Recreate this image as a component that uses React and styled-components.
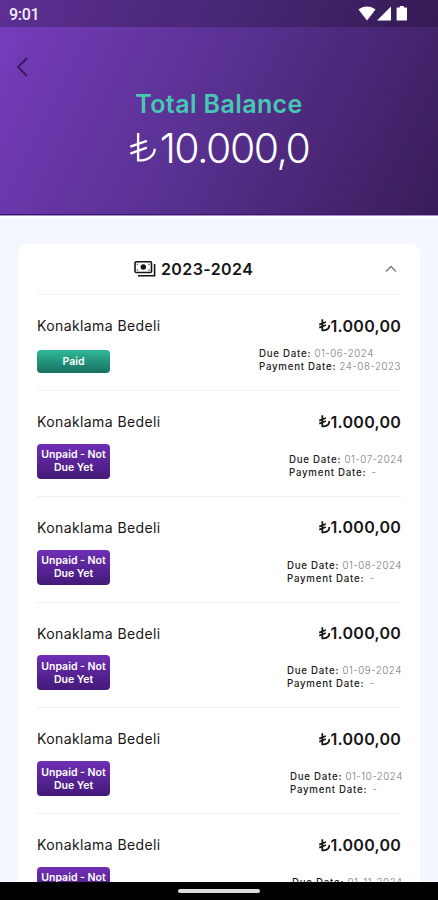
import styled, { createGlobalStyle } from "styled-components";

const payments = [
  { id: 1, paid: true, due: "01-06-2024", paidAt: "24-08-2023", width: 142 },
  { id: 2, due: "01-07-2024", width: 112 },
  { id: 3, due: "01-08-2024", width: 114 },
  { id: 4, due: "01-09-2024", width: 114 },
  { id: 5, due: "01-10-2024", width: 111 },
  { id: 6, due: "01-11-2024", width: 109 },
];

const PaymentRow = ({ payment }) => {
  const { paid, due, paidAt, width } = payment;
  return (
    <Row $paid={paid}>
      <RowTop>
        <Name>Konaklama Bedeli</Name>
        <Price>
          <LiraIcon $size={13} viewBox="0 0 28 32">
            <path d="M9 3v25h3c8 0 13-5 13-12M2 15l15-6M2 22l15-6" strokeWidth="4" />
          </LiraIcon>
          1.000,00
        </Price>
      </RowTop>
      <RowBottom>
        <Badge $paid={paid}>{paid ? "Paid" : "Unpaid - Not Due Yet"}</Badge>
        <Dates $width={width}>
          <DateLine>
            <b>Due Date:</b> {due}
          </DateLine>
          <DateLine>
            <b>Payment Date:</b> {paidAt || <Dash>-</Dash>}
          </DateLine>
        </Dates>
      </RowBottom>
    </Row>
  );
};

const App = () => {
  return (
    <Screen>
      <GlobalStyle />
      <Header>
        <StatusBar>
          <Time>9:01</Time>
          <svg width="52" height="18" viewBox="0 0 52 18" fill="#fff">
            <path d="M0.5 4.6C5.5 0.6 12.5 0.6 17.5 4.6L9 15.5Z" />
            <path d="M33 1.5V15.5H19Z" />
            <path d="M41.8 1h4v1.5h2.6q.6 0 .6.6v11.8q0 .6-.6.6h-9.2q-.6 0-.6-.6v-11.8q0-.6.6-.6h2.6z" />
          </svg>
        </StatusBar>
        <BackButton>
          <svg width="14" height="22" viewBox="0 0 14 22" fill="none" stroke="#3a1760" strokeWidth="1.9">
            <path d="M12 2L3 11l9 9" />
          </svg>
        </BackButton>
        <Label>Total Balance</Label>
        <Balance>
          <LiraIcon $size={29} viewBox="0 0 29 32">
            <path d="M9 1v28h3c8 0 14-6 14-12M1 15l17-6M1 22l17-6" strokeWidth="2.4" />
          </LiraIcon>
          <span>10.000,0</span>
        </Balance>
      </Header>
      <Card>
        <CardHeader>
          <svg width="22" height="18" viewBox="0 0 22 18" fill="none" stroke="#161616" strokeWidth="1.6">
            <rect x="1" y="1.7" width="16.5" height="10.8" rx="1.2" />
            <path d="M20.6 4v11.8H4" />
            <circle cx="9.3" cy="7" r="2.7" fill="#161616" stroke="none" />
            <path d="M3.2 4.8V4h1M15.3 4.8V4h-1M3.2 9.4v.8h1M15.3 9.4v.8h-1" strokeWidth="0.8" />
          </svg>
          <Year>2023-2024</Year>
          <Chevron width="12" height="8" viewBox="0 0 12 8">
            <path d="M1 6.5L6 1.5l5 5" />
          </Chevron>
        </CardHeader>
        {payments.map((payment) => (
          <PaymentRow key={payment.id} payment={payment} />
        ))}
      </Card>
      <NavBar>
        <Handle />
      </NavBar>
    </Screen>
  );
};

export default App;

const GlobalStyle = createGlobalStyle`
  * {
    box-sizing: border-box;
  }
  body {
    margin: 0;
    font-family: Inter, Roboto, sans-serif;
    color: #161616;
  }
`;

const Screen = styled.div`
  width: 438px;
  height: 900px;
  display: flex;
  flex-direction: column;
  overflow: hidden;
  background-color: #f4f7ff;
`;

const Header = styled.header`
  height: 216px;
  flex-shrink: 0;
  display: flex;
  flex-direction: column;
  align-items: center;
  background: linear-gradient(116deg, #773dbd 0%, #57308f 50%, #3a1c59 100%);
  border-bottom: 1px solid #a394bd;
  box-shadow: inset 0 -1px 0 #3d1475, 0 2px 0 #fff;
`;

const StatusBar = styled.div`
  width: 100%;
  height: 27px;
  flex-shrink: 0;
  display: flex;
  align-items: center;
  justify-content: space-between;
  padding: 0 28px 0 9px;
  background-color: rgba(0, 0, 0, 0.22);
`;

const Time = styled.span`
  font-family: Roboto, sans-serif;
  font-size: 16px;
  font-weight: 500;
  letter-spacing: -0.3px;
  color: #f4ecff;
  padding-top: 2px;
`;

const BackButton = styled.button`
  align-self: flex-start;
  height: 22px;
  margin: 29px 0 0 15px;
  padding: 0;
  border: none;
  background-color: transparent;
`;

const Label = styled.h1`
  margin: 11px 0 0;
  font-size: 25px;
  line-height: 30px;
  font-weight: 600;
  letter-spacing: 0.4px;
  color: #45c9b0;
`;

const Balance = styled.div`
  display: flex;
  align-items: center;
  gap: 2px;
  height: 56px;
  font-size: 41px;
  font-weight: 300;
  letter-spacing: -1.5px;
  color: #fff;
  margin-top: 1px;
`;

const LiraIcon = styled.svg`
  width: ${({ $size }) => $size}px;
  height: ${({ $size }) => $size * 1.08}px;
  fill: none;
  stroke: currentColor;
  flex-shrink: 0;
`;

const Card = styled.main`
  flex: 1;
  min-height: 0;
  overflow: hidden;
  margin: 28px 18px 0;
  padding: 0 19px;
  border-radius: 9px 9px 0 0;
  background-color: #fff;
`;

const CardHeader = styled.div`
  height: 51px;
  display: flex;
  align-items: center;
  padding-left: 97px;
  border-bottom: 1px solid #f1f0f0;
`;

const Year = styled.span`
  margin-left: 5px;
  font-size: 16px;
  font-weight: 600;
  letter-spacing: 0.4px;
`;

const Chevron = styled.svg`
  margin-left: auto;
  margin-right: 4px;
  fill: none;
  stroke: #777;
  stroke-width: 1.3;
`;

const Row = styled.div`
  height: ${({ $paid }) => ($paid ? "96px" : "105.8px")};
  padding: 20px 0 17px;
  display: flex;
  flex-direction: column;
  justify-content: space-between;
  border-bottom: 1px solid #f1f0f0;
`;

const RowTop = styled.div`
  display: flex;
  justify-content: space-between;
  align-items: center;
  height: 21px;
`;

const Name = styled.span`
  font-size: 14px;
  font-weight: 400;
  letter-spacing: 0.4px;
`;

const Price = styled.span`
  display: flex;
  align-items: center;
  font-size: 16px;
  font-weight: 600;
  letter-spacing: 0.25px;
`;

const RowBottom = styled.div`
  display: flex;
  justify-content: space-between;
  align-items: flex-end;
`;

const Badge = styled.span`
  width: 73px;
  height: ${({ $paid }) => ($paid ? "23px" : "35px")};
  display: flex;
  align-items: center;
  justify-content: center;
  text-align: center;
  border-radius: 4px;
  font-size: 10.5px;
  line-height: 13px;
  font-weight: 600;
  color: #fff;
  background: ${({ $paid }) =>
    $paid
      ? "linear-gradient(#2fb899, #17705f)"
      : "linear-gradient(#6f2fb5, #431a78)"};
`;

const Dates = styled.div`
  width: ${({ $width }) => $width}px;
`;

const DateLine = styled.div`
  font-size: 9.7px;
  line-height: 13px;
  font-weight: 300;
  letter-spacing: 0.55px;
  white-space: nowrap;
  color: #777;

  b {
    font-weight: 500;
    letter-spacing: 0.75px;
    color: #222;
  }
`;

const Dash = styled.span`
  margin-left: 2px;
`;

const NavBar = styled.footer`
  height: 18px;
  flex-shrink: 0;
  display: flex;
  align-items: center;
  justify-content: center;
  background-color: #000;
`;

const Handle = styled.div`
  width: 82px;
  height: 4px;
  border-radius: 2px;
  background-color: #ddd;
`;
